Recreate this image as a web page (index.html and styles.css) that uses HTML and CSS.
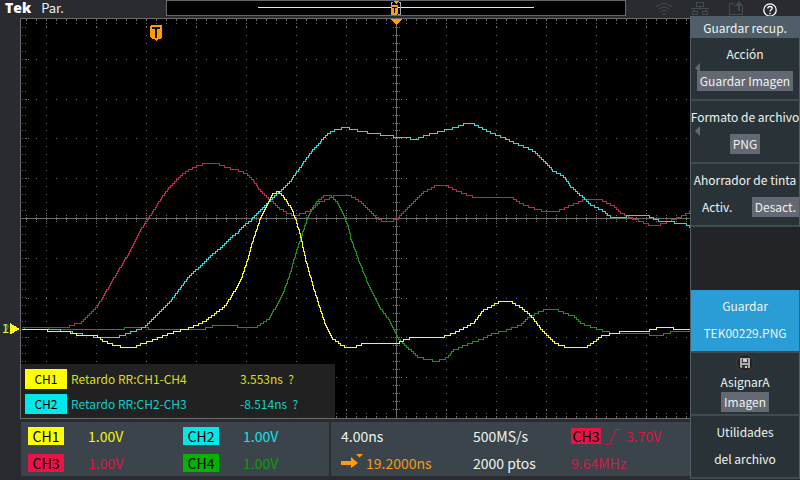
FILE: index.html
```html
<!DOCTYPE html>
<html lang="es">
<head>
<meta charset="utf-8">
<title>Osciloscopio</title>
<link rel="stylesheet" href="styles.css">
</head>
<body>
<div class="scope">
  <header class="topbar">
    <div class="brand"><span class="logo">Tek</span><span class="status">Par.</span></div>
    <svg class="navigator" viewBox="0 0 460 16" preserveAspectRatio="none" shape-rendering="crispEdges" aria-hidden="true">
      <rect x="0" y="0" width="460" height="16" fill="#666469"/>
      <rect x="1" y="1" width="458" height="14" fill="#000"/>
      <path d="M92 7.500H368" stroke="#ffff1a"/>
      <path d="M227 2.500H225.500V14.500H227M233 2.500H234.500V14.500H232" fill="none" stroke="#a5a5ad"/>
      <path d="M227 1H233L230 4ZM225 5H232V13L230 15H227L225 13Z" fill="#ff9c0a"/>
      <path d="M226 7.500H231M228.500 7V13" stroke="#000"/>
    </svg>
    <div class="icons">
      <svg width="18" height="16" viewBox="0 0 18 16" fill="none" stroke="#424b50" aria-hidden="true">
        <path d="M1 7Q9 0 17 7M3.500 9.500Q9 4.500 14.500 9.500M6 11.500Q9 9 12 11.500"/><circle cx="9" cy="14" r="1" fill="#424b50" stroke="none"/>
      </svg>
      <svg width="18" height="16" viewBox="0 0 18 16" fill="none" stroke="#424b50" shape-rendering="crispEdges" aria-hidden="true">
        <path d="M5.500 2.500H12.500V6.500H5.500ZM1.500 11.500H6.500V14.500H1.500ZM11.500 11.500H16.500V14.500H11.500ZM9 7V9M0 8.500H18M3.500 9V11M14.500 9V11"/>
      </svg>
      <svg width="18" height="16" viewBox="0 0 18 16" fill="none" stroke="#424b50" aria-hidden="true">
        <path d="M10 5.500H7.500L6.500 3.500H2.500V14.500H15.500V5.500H14"/><path d="M12 11V4M9.500 5.500L12 2.500L14.500 5.500" stroke-width="2"/>
      </svg>
      <button class="help" aria-label="Ayuda"><svg width="14" height="14" viewBox="0 0 14 14" fill="none" stroke="#fff" stroke-width="1.300" aria-hidden="true">
        <circle cx="7" cy="7" r="6.200"/><path d="M4.800 5.600Q4.800 3.500 7 3.500Q9.200 3.500 9.200 5.300Q9.200 6.300 8 6.900Q7 7.500 7 8.600M7 9.800V11.200"/>
      </svg></button>
    </div>
  </header>

  <main class="display">
    <div class="screen">
      <svg class="plot" viewBox="0 18 690 401" shape-rendering="crispEdges" role="img" aria-label="Formas de onda">
        <rect x="20" y="18" width="670" height="401" fill="#000"/>
        <path id="graticule" fill="#6b6b6b"/>
        <path d="M20.500 18V419M20 18.500H690M20 418.500H690M20 218.500H690M396.500 18V419" stroke="#6b6b6b"/>
        <g fill="none">
          <path id="ch4" stroke="#0c9c0c"/>
          <path id="ch3" stroke="#dc184c"/>
          <path id="ch2" stroke="#12e5e8"/>
          <path id="ch1" stroke="#fffa14"/>
        </g>
        <path d="M391 19H402L396.500 25Z" fill="#ff9c0a"/>
        <path d="M151 25H161L162 26V37L160 39H158L156 41L154 39H152L150 37V26Z" fill="#ff9c0a"/>
        <path d="M152 27H160V29H157V38H155V29H152Z" fill="#111"/>
        <path d="M10 323L20 329L10 334.500Z" fill="#ffff00"/>
        <text class="ground" x="3" y="333" fill="#18b060">2</text>
        <text class="ground" x="2" y="333" fill="#f0f03c">1</text>
      </svg>
      <div class="measurements">
        <span class="tag ch1-bg">CH1</span><span class="ch1">Retardo RR:CH1-CH4</span><span class="ch1">3.553ns&nbsp; ?</span>
        <span class="tag ch2-bg">CH2</span><span class="ch2">Retardo RR:CH2-CH3</span><span class="ch2">-8.514ns&nbsp; ?</span>
      </div>
    </div>
    <div class="readouts">
      <section class="panel channels">
        <span class="tag ch1-bg">CH1</span><span class="ch1">1.00V</span>
        <span class="tag ch2-bg">CH2</span><span class="ch2">1.00V</span>
        <span class="tag ch3-bg">CH3</span><span class="ch3">1.00V</span>
        <span class="tag ch4-bg">CH4</span><span class="ch4">1.00V</span>
      </section>
      <section class="panel timing">
        <span>4.00ns</span><span>500MS/s</span>
        <span class="trigger ch3"><span class="tag ch3-bg">CH3</span><svg width="17" height="17" viewBox="0 0 17 17" fill="none" stroke="#e01548" aria-hidden="true"><path d="M0 16.500H5L11 1.500H16"/></svg>3.70V</span>
        <span class="delay"><svg width="22" height="18" viewBox="0 0 22 18" fill="#ff9c0a" aria-hidden="true"><path d="M0 7H10V3L17 9L10 14V11H0ZM15 0H22L18.500 3.500Z"/></svg>19.2000ns</span>
        <span>2000 ptos</span><span class="ch3">9.64MHz</span>
      </section>
    </div>
  </main>

  <nav class="menu">
    <h1 class="title">Guardar recup.</h1>
    <button class="item more"><span>Acción</span><span class="value">Guardar Imagen</span></button>
    <button class="item more"><span>Formato de archivo</span><span class="value">PNG</span></button>
    <button class="item"><span>Ahorrador de tinta</span><span class="options"><span>Activ.</span><span class="value">Desact.</span></span></button>
    <div class="empty"></div>
    <button class="item save"><span>Guardar</span><span>TEK00229.PNG</span></button>
    <button class="item assign">
      <svg width="18" height="18" viewBox="0 0 18 18" aria-hidden="true"><circle cx="9" cy="9" r="8.500" fill="#242424" stroke="#44403f"/><path d="M4 4H14V14H5L4 13Z" fill="#aaa"/><path d="M6 5H12V9H6ZM6 11H12V14H6Z" fill="#333"/><path d="M7 5H11V8H7ZM9 12H11V14H9Z" fill="#ccc"/></svg>
      <span>AsignarA</span><span class="value">Imagen</span></button>
    <button class="item"><span>Utilidades</span><span>del archivo</span></button>
  </nav>
</div>
<script src="plot.js"></script>
</body>
</html>
```
FILE: styles.css
```css
* { box-sizing: border-box; }

body {
  margin: 0;
  background: #292b31;
  color: #eef3ef;
  font: 12px/20px "Noto Sans CJK SC", "Noto Sans", sans-serif;
}

button {
  margin: 0;
  padding: 0;
  border: 0;
  background: none;
  color: inherit;
  font: inherit;
}

.scope {
  display: grid;
  grid-template-columns: 1fr 110px;
  grid-template-rows: 16px auto;
  min-height: 100vh;
}

.topbar {
  grid-column: 1 / -1;
  display: flex;
}

.brand {
  display: flex;
  align-items: center;
  gap: 10px;
  width: 166px;
  padding-left: 5px;
  line-height: 16px;
}

.logo {
  color: #fff;
  font-family: "Open Sans", "Noto Sans", sans-serif;
  font-size: 14px;
  font-weight: 800;
}

.status { font-size: 13px; }

.navigator {
  flex: 1;
  min-width: 0;
  height: 16px;
}

.icons {
  display: flex;
  align-items: center;
  gap: 18px;
  width: 174px;
  padding-left: 29px;
}

.help { display: flex; padding-top: 3px; }

.display { padding-top: 2px; }

.screen { position: relative; }

.plot { display: block; width: 100%; }

.ground { font: 12px "Noto Sans CJK SC", sans-serif; }

.measurements {
  position: absolute;
  left: 21px;
  bottom: 1px;
  display: grid;
  grid-template-columns: 42px 165px auto;
  row-gap: 5px;
  column-gap: 4px;
  width: 314px;
  padding: 5px 4px 4px;
  background: rgba(36, 36, 36, 0.92);
}

.measurements .ch1 { color: #dede14; }
.measurements .ch2 { color: #14ccc8; }

.tag {
  color: #000;
  text-align: center;
}

.ch1 { color: #f4f414; }
.ch2 { color: #14e2e4; }
.ch3 { color: #d81846; }
.ch4 { color: #0a9e0a; }
.ch1-bg { background: #ffff00; }
.ch2-bg { background: #00e8e8; }
.ch3-bg { background: #e81448; }
.ch4-bg { background: #00b400; }

.readouts {
  display: flex;
  gap: 2px;
  padding: 3px 0 0 21px;
}

.panel {
  display: grid;
  align-items: center;
  grid-auto-rows: 18px;
  row-gap: 9px;
  padding: 5px 0 4px;
  background: #3a444a;
  font-size: 14px;
}

.panel .tag { line-height: 18px; }

.channels {
  grid-template-columns: 36px 71px 36px 1fr;
  column-gap: 24px;
  width: 308px;
  padding-left: 7px;
}

.timing {
  flex: 1;
  grid-template-columns: 132px 98px 1fr;
  padding-left: 10px;
}

.trigger { display: flex; align-items: center; gap: 4px; }
.trigger .tag { width: 30px; line-height: 16px; }
.delay { display: flex; align-items: center; gap: 3px; color: #f49a14; }

.menu {
  padding-bottom: 1px;
  white-space: nowrap;
}

.title {
  margin: 0;
  height: 22px;
  background: #4f5e69;
  font-size: 12px;
  font-weight: 400;
  line-height: 23px;
  text-align: center;
}

.item {
  position: relative;
  display: flex;
  flex-direction: column;
  align-items: center;
  gap: 7px;
  width: 100%;
  height: 63px;
  padding-top: 6px;
  border: solid #4f5e69;
  border-width: 0 1px 2px;
  border-color: #4f5e69 #4f5e69 #3d4c4f;
  background: #293337;
}

.value {
  padding: 0 3px;
  background: #646873;
}

.options { display: flex; align-self: stretch; justify-content: space-between; padding-left: 11px; }

.more::before {
  content: "";
  position: absolute;
  left: 4px;
  top: 25px;
  border: solid transparent;
  border-width: 5px 5px 5px 0;
  border-right-color: #66696b;
}

.empty { height: 63px; border-left: 1px solid #4f5e69; background: #222428; }
.save { background: #2a9dd6; }
.assign { gap: 0; padding-top: 1px; }
```
FILE: plot.js
```js
const traces = {
  ch1: [22,329,46,329,48,331,70,332,76,334,86,335,97,336,102,340,112,344,123,347,133,347,142,343,154,339,164,335,175,331,187,328,195,325,205,320,213,314,220,309,226,303,234,290,241,277,247,258,252,240,257,225,262,212,268,201,272,193,278,191,283,197,290,207,295,219,300,237,305,260,312,285,318,304,324,323,332,338,340,344,346,347,353,347,360,344,396,343,402,340,411,337,440,337,452,333,461,329,473,322,482,310,490,306,497,302,510,301,520,307,530,315,540,328,548,337,555,343,566,347,585,347,594,341,600,336,612,333,624,331,646,331,650,329,661,327,671,327,674,329,690,329],
  ch2: [22,329,48,329,60,330,72,332,86,335,100,337,116,337,124,334,135,330,143,327,150,320,160,310,170,300,180,287,190,274,197,268,210,255,218,249,230,237,237,232,244,224,250,220,260,209,270,199,280,190,290,180,300,166,310,152,320,141,327,133,336,129,345,127,360,131,373,133,387,135,398,137,410,138,417,138,425,135,440,131,455,127,462,124,471,123,478,126,490,132,500,136,515,143,532,150,540,157,552,170,562,175,570,186,580,195,590,204,600,209,611,217,624,217,626,215,646,215,655,219,661,221,670,221,677,223,686,224,690,227],
  ch3: [22,327,66,327,70,325,80,322,83,319,96,307,100,300,110,283,120,266,126,256,133,243,140,229,147,219,156,205,163,194,171,184,180,175,187,170,195,166,205,163,217,163,220,165,230,168,241,171,245,173,250,177,258,188,270,200,279,208,287,213,294,215,302,213,312,209,318,202,328,198,337,194,345,194,353,197,358,200,368,209,376,217,381,220,390,221,397,218,405,209,414,201,422,192,432,187,437,184,443,184,450,187,456,190,466,194,474,197,511,197,520,203,530,207,544,211,556,211,570,205,584,199,599,199,612,205,620,212,629,217,640,221,650,225,656,225,665,222,680,216,690,211],
  ch4: [22,329,24,327,47,327,49,329,122,329,124,327,147,327,149,329,198,329,210,327,212,325,236,325,237,327,255,327,262,322,268,318,274,308,282,293,288,277,294,256,300,237,305,222,310,210,316,201,324,195,331,196,337,202,342,213,347,225,350,238,358,260,368,285,380,308,390,322,398,338,408,348,418,357,428,359,435,361,447,357,453,349,455,349,466,344,480,339,490,334,505,330,519,325,527,317,535,313,545,309,555,309,565,313,574,316,580,323,590,326,602,330,612,333,648,333,650,335,660,335,664,333,674,331,690,331]
};

// The sampled levels fall on every second pixel row.
function steppedPath(points) {
  let d = "";
  let last = null;
  for (let i = 0; i + 3 < points.length; i += 2) {
    const [x0, y0, x1, y1] = points.slice(i, i + 4);
    for (let x = x0; x < x1; x++) {
      const value = y0 + (y1 - y0) * (x - x0) / (x1 - x0);
      const y = Math.round((value - 1) / 2) * 2 + 1;
      if (last === null) d = `M${x} ${y + 0.5}`;
      else if (y !== last) d += `H${x + 0.5}V${y + 0.5}`;
      last = y;
    }
  }
  return d + "H690";
}

for (const [id, points] of Object.entries(traces)) {
  document.getElementById(id).setAttribute("d", steppedPath(points));
}

let dots = "";
const dot = (x, y) => { dots += `M${x} ${Math.floor(y)}h1v1h-1z`; };
const rows = [59, 99, 138, 178, 218, 258, 298, 337, 377];

for (let x = 26; x < 690; x += 10) {
  rows.forEach(y => dot(x, y));
  const major = (x - 46) % 50 === 0;
  [19, 20, 23, 413, 416, 417, 215, 217, 219, 221].forEach(y => dot(x, y));
  if (major) [26, 27, 410, 213, 223].forEach(y => dot(x, y));
}
for (let i = -24; i <= 24; i++) {
  const y = 218.4 + i * 7.95;
  for (let x = 46; x < 690; x += 50) dot(x, y);
  [22, 25, 393, 395, 397, 399].forEach(x => dot(x, y));
}
rows.forEach(y => [28, 391, 401].forEach(x => dot(x, y)));
document.getElementById("graticule").setAttribute("d", dots);
```
